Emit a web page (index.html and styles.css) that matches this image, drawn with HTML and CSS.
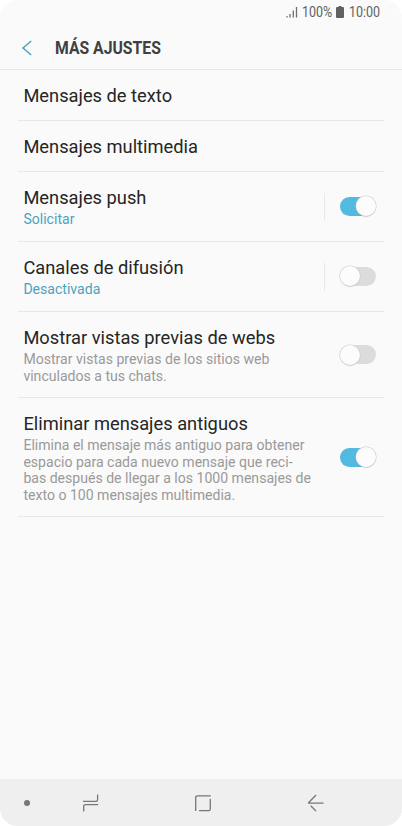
FILE: index.html
```
<!DOCTYPE html>
<html lang="es">
<head>
    <meta charset="UTF-8">
    <meta name="viewport" content="width=device-width, initial-scale=1.0">
    <title>Más ajustes</title>
    <link rel="stylesheet" href="styles.css">
</head>
<body>
    <div class="phone">
        <!-- Status bar -->
        <div class="status-bar">
            <svg class="signal" width="12" height="12" viewBox="0 0 12 12">
                <path d="M1 10v1.500M4 8v3.500M7.300 4.500v7M10.500 1v10.500"/>
            </svg>
            <span class="battery-level"><span class="condensed">100%</span></span>
            <svg class="battery" width="8" height="12" viewBox="0 0 8 12">
                <path d="M2.500 0h3v1H7q1 0 1 1v9q0 1-1 1H1q-1 0-1-1V2q0-1 1-1h1.500z"/>
            </svg>
            <span class="clock"><span class="condensed">10:00</span></span>
        </div>

        <header>
            <svg class="back" width="12" height="18" viewBox="0 0 12 18">
                <path d="M10.200 2L2 9l8.200 7"/>
            </svg>
            <h1 class="condensed">MÁS AJUSTES</h1>
        </header>

        <!-- Settings -->
        <ul class="settings">
            <li>
                <h2>Mensajes de texto</h2>
            </li>
            <li>
                <h2>Mensajes multimedia</h2>
            </li>
            <li>
                <div class="text">
                    <h2>Mensajes push</h2>
                    <p class="value">Solicitar</p>
                </div>
                <span class="separator"></span>
                <span class="switch on"></span>
            </li>
            <li>
                <div class="text">
                    <h2>Canales de difusión</h2>
                    <p class="value">Desactivada</p>
                </div>
                <span class="separator"></span>
                <span class="switch"></span>
            </li>
            <li>
                <div class="text">
                    <h2>Mostrar vistas previas de webs</h2>
                    <p>Mostrar vistas previas de los sitios web<br>vinculados a tus chats.</p>
                </div>
                <span class="switch"></span>
            </li>
            <li>
                <div class="text">
                    <h2>Eliminar mensajes antiguos</h2>
                    <p>Elimina el mensaje más antiguo para obtener<br>espacio para cada nuevo mensaje que reci-<br>bas después de llegar a los 1000 mensajes de<br>texto o 100 mensajes multimedia.</p>
                </div>
                <span class="switch on"></span>
            </li>
        </ul>

        <!-- Navigation bar -->
        <nav>
            <span class="dot"></span>
            <svg class="recents" width="18" height="20" viewBox="0 0 18 20">
                <path d="M1 8.300h13q1.600 0 1.600-1.600V1.500M1.700 18.500v-5.200q0-1.600 1.600-1.600H16.200"/>
            </svg>
            <svg class="home" width="18" height="20" viewBox="0 0 18 20">
                <path d="M16.700 2.800H3.500q-1.800 0-1.800 1.800V18M16.300 6v10q0 1.600-1.600 1.600H5"/>
            </svg>
            <svg class="return" width="18" height="20" viewBox="0 0 18 20">
                <path d="M9 2L1.700 9.500V10.200H16.500M3.700 12.800L9 18"/>
            </svg>
        </nav>
    </div>
</body>
</html>
```
FILE: styles.css
```
* {
    box-sizing: border-box;
}

body {
    margin: 0;
    background: white;
    font-family: Roboto, "Liberation Sans", sans-serif;
    color: #252525;
}

.phone {
    width: 402px;
    height: 826px;
    display: flex;
    flex-direction: column;
    background: #fafafa;
    border-radius: 18px;
    overflow: hidden;
}

h1, h2, p, ul {
    margin: 0;
    padding: 0;
    font-weight: normal;
}

svg {
    display: block;
    flex: none;
    fill: none;
}

/* Roboto narrowed to its condensed width */
.condensed {
    display: block;
    white-space: nowrap;
    transform: scaleX(0.88);
    transform-origin: left;
}

.status-bar {
    height: 24px;
    display: flex;
    align-items: center;
    padding-left: 286px;
    font-size: 14.2px;
    line-height: 24px;
    color: #606060;
}

.signal {
    stroke: #707070;
    stroke-width: 1.3;
}

.battery-level {
    width: 30px;
    margin-left: 4px;
}

.battery {
    margin-left: 4px;
    fill: #606060;
}

.clock {
    width: 32px;
    margin-left: 4.5px;
}

header {
    height: 46px;
    display: flex;
    align-items: center;
    padding: 2px 0 0 21px;
    border-bottom: 1px solid #e8e8e8;
}

.back {
    stroke: #4ba3c0;
    stroke-width: 1.5;
}

h1 {
    margin-left: 22px;
    font-size: 17.9px;
    font-weight: bold;
    line-height: 22px;
    color: #404040;
}

.settings {
    flex: 1;
    margin: 0 18px;
    list-style-type: none;
}

li {
    display: flex;
    align-items: center;
    padding: 15px 8.5px 13px 5.4px;
    border-bottom: 1px solid #e8e8e8;
}

.text {
    flex: 1;
    white-space: nowrap;
}

h2 {
    font-size: 18.3px;
    line-height: 22px;
}

p {
    padding-top: 2px;
    font-size: 14.07px;
    line-height: 16.5px;
    color: #999;
}

.value {
    padding-bottom: 0.5px;
    color: #4ba3c0;
}

.separator {
    width: 1px;
    height: 28px;
    margin: 0 14.5px 2px 0;
    background: #e8e8e8;
}

.switch {
    width: 36px;
    height: 19px;
    flex: none;
    display: flex;
    align-items: center;
    margin-bottom: 2px;
    border-radius: 10px;
    background: #dcdcdc;
}

.separator + .switch {
    margin-bottom: 3px;
}

.switch::after {
    content: "";
    width: 20px;
    height: 20px;
    flex: none;
    border-radius: 50%;
    background: #fcfcfc;
    box-shadow: 0 0 0 0.5px #ccc, 0 0.5px 1px rgba(0, 0, 0, 0.3);
}

.on {
    justify-content: flex-end;
    background: #52bae0;
}

nav {
    height: 47px;
    display: flex;
    align-items: center;
    padding: 1px 0 0 24px;
    background: #efefef;
    stroke: #777;
    stroke-width: 1.3;
}

.dot {
    width: 6px;
    height: 6px;
    border-radius: 50%;
    background: #777;
}

.recents {
    margin-left: 52px;
}

.home {
    margin-left: 94px;
}

.return {
    margin-left: 95px;
}
```
